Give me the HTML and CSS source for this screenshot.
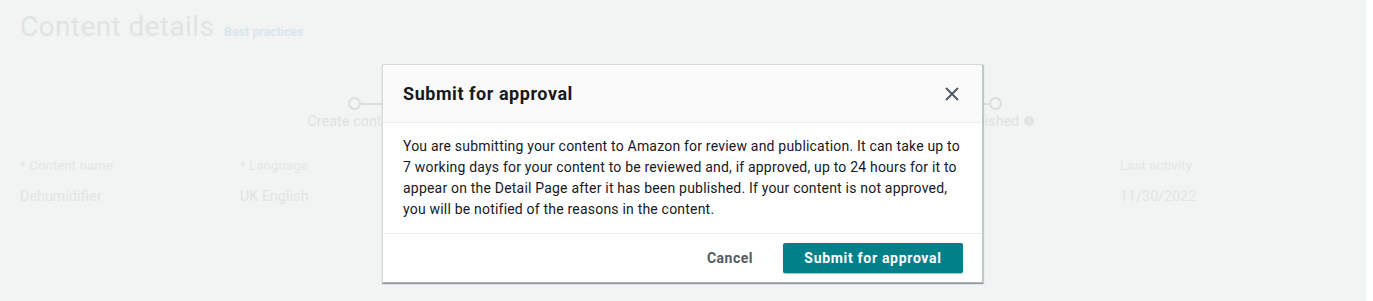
FILE: index.html
```html
<!DOCTYPE html>
<html lang="en">
<head>
<meta charset="utf-8">
<title>Submit for approval</title>
<link rel="stylesheet" href="styles.css">
</head>
<body>
<div class="shell">
  <main class="page">
    <header class="page-head">
      <h1 class="page-title">Content details</h1>
      <a class="best">Best practices</a>
    </header>
    <ol class="stepper">
      <li class="step"><span class="dot"></span><span class="step-label">Create content</span></li>
      <li class="step"><span class="dot"></span></li>
      <li class="step"><span class="dot"></span></li>
      <li class="step last"><span class="dot"></span><span class="step-label">Published <span class="info">i</span></span></li>
    </ol>
    <div class="fields">
      <div class="field"><div class="f-label">* Content name</div><div class="f-value">Dehumidifier</div></div>
      <div class="field"><div class="f-label">* Language</div><div class="f-value">UK English</div></div>
      <div class="field"></div>
      <div class="field"></div>
      <div class="field"></div>
      <div class="field"><div class="f-label">Last activity</div><div class="f-value">11/30/2022</div></div>
    </div>
  </main>
  <div class="gutter"></div>
</div>

<div class="modal" role="dialog" aria-labelledby="mt">
  <div class="modal-head">
    <h2 id="mt" class="modal-title">Submit for approval</h2>
    <button class="close" aria-label="Close">
      <svg width="16" height="16" viewBox="0 0 16 16"><path d="M2 2L14 14M14 2L2 14" stroke="#545b64" stroke-width="2" fill="none"/></svg>
    </button>
  </div>
  <div class="modal-body">
    You are submitting your content to Amazon for review and publication. It can take up to 7 working days for your content to be reviewed and, if approved, up to 24 hours for it to appear on the Detail Page after it has been published. If your content is not approved, you will be notified of the reasons in the content.
  </div>
  <div class="modal-foot">
    <button class="btn-link">Cancel</button>
    <button class="btn-primary">Submit for approval</button>
  </div>
</div>
</body>
</html>
```

FILE: styles.css
```css
html, body {
  margin: 0;
  padding: 0;
}
body {
  font-family: Roboto, "Liberation Sans", sans-serif;
  background: #ffffff;
  height: 301px;
  overflow: hidden;
}
.shell {
  display: flex;
  height: 301px;
}
.page {
  width: 1366px;
  flex: none;
  background: #f2f3f3;
  color: #e0e3e3;
  padding: 10px 0 0 20px;
  box-sizing: border-box;
}
.gutter {
  flex: 1;
  background: #ffffff;
}
.page-head {
  display: flex;
  align-items: baseline;
  gap: 10px;
}
.page-title {
  margin: 0;
  font-size: 28px;
  font-weight: 400;
  line-height: 34px;
  letter-spacing: 0.4px;
  color: #e1e3e3;
}
.best {
  font-size: 12px;
  font-weight: 700;
  letter-spacing: 0.15px;
  color: #dbe6ea;
}
.stepper {
  list-style: none;
  margin: 53px 0 0 228px;
  padding: 0;
  display: flex;
  width: 854px;
}
.step {
  flex: 1;
  display: flex;
  flex-direction: column;
  align-items: center;
  position: relative;
}
.step::after {
  content: "";
  position: absolute;
  top: 6px;
  left: calc(50% + 6px);
  width: calc(100% - 12px);
  height: 2px;
  background: #d9dede;
}
.step.last::after {
  display: none;
}
.dot {
  width: 9px;
  height: 9px;
  border: 2px solid #d9dede;
  border-radius: 50%;
  box-sizing: content-box;
  background: #f2f3f3;
}
.step-label {
  margin-top: 1px;
  font-size: 14px;
  line-height: 20px;
  letter-spacing: 0.2px;
  color: #dee1e1;
  white-space: nowrap;
  display: flex;
  align-items: center;
  gap: 5px;
}
.info {
  display: inline-flex;
  width: 10px;
  height: 10px;
  border-radius: 50%;
  background: #dfe2e2;
  color: #f2f3f3;
  font-size: 8px;
  font-weight: 700;
  align-items: center;
  justify-content: center;
}
.fields {
  margin-top: 25px;
  display: grid;
  grid-template-columns: repeat(6, 220px);
}
.f-label {
  font-size: 13px;
  line-height: 20px;
  letter-spacing: 0.2px;
  color: #e3e6e6;
}
.f-value {
  margin-top: 10px;
  font-size: 14px;
  line-height: 20px;
  letter-spacing: 0.2px;
  color: #e1e4e4;
}

.modal {
  position: absolute;
  left: 382px;
  top: 64px;
  width: 601px;
  box-sizing: border-box;
  background: #ffffff;
  border: 1px solid #d5dbdb;
  border-bottom-color: #aab7b8;
  border-right-color: #c0c8c8;
  box-shadow: 0 1px 1px rgba(0, 28, 36, 0.3), 1px 1px 1px rgba(0, 28, 36, 0.15);
  color: #16191f;
}
.modal-head {
  display: flex;
  align-items: center;
  justify-content: space-between;
  height: 57px;
  padding: 0 20px;
  background: #fafafa;
  border-bottom: 1px solid #eaeded;
}
.modal-title {
  margin: 0;
  font-size: 18px;
  font-weight: 700;
  letter-spacing: 0.55px;
  color: #16191f;
}
.close {
  border: 0;
  background: none;
  padding: 0;
  width: 16px;
  height: 16px;
  margin-right: 2px;
  display: flex;
  cursor: pointer;
}
.modal-body {
  padding: 13px 20px 13px;
  font-size: 14px;
  line-height: 21px;
  letter-spacing: 0.2px;
}
.modal-foot {
  display: flex;
  justify-content: flex-end;
  align-items: center;
  gap: 20px;
  padding: 9px 19px 9px 20px;
  border-top: 1px solid #eaeded;
}
.btn-link {
  border: 0;
  background: none;
  font-family: inherit;
  font-size: 14px;
  font-weight: 700;
  letter-spacing: 0.5px;
  color: #545b64;
  padding: 4px 10px;
}
.btn-primary {
  border: 0;
  border-radius: 2px;
  background: #00818a;
  color: #ffffff;
  font-family: inherit;
  font-size: 14px;
  font-weight: 700;
  letter-spacing: 0.7px;
  height: 30px;
  width: 180px;
  padding: 0;
  box-shadow: 0 1px 1px rgba(0, 28, 36, 0.3);
}
```
